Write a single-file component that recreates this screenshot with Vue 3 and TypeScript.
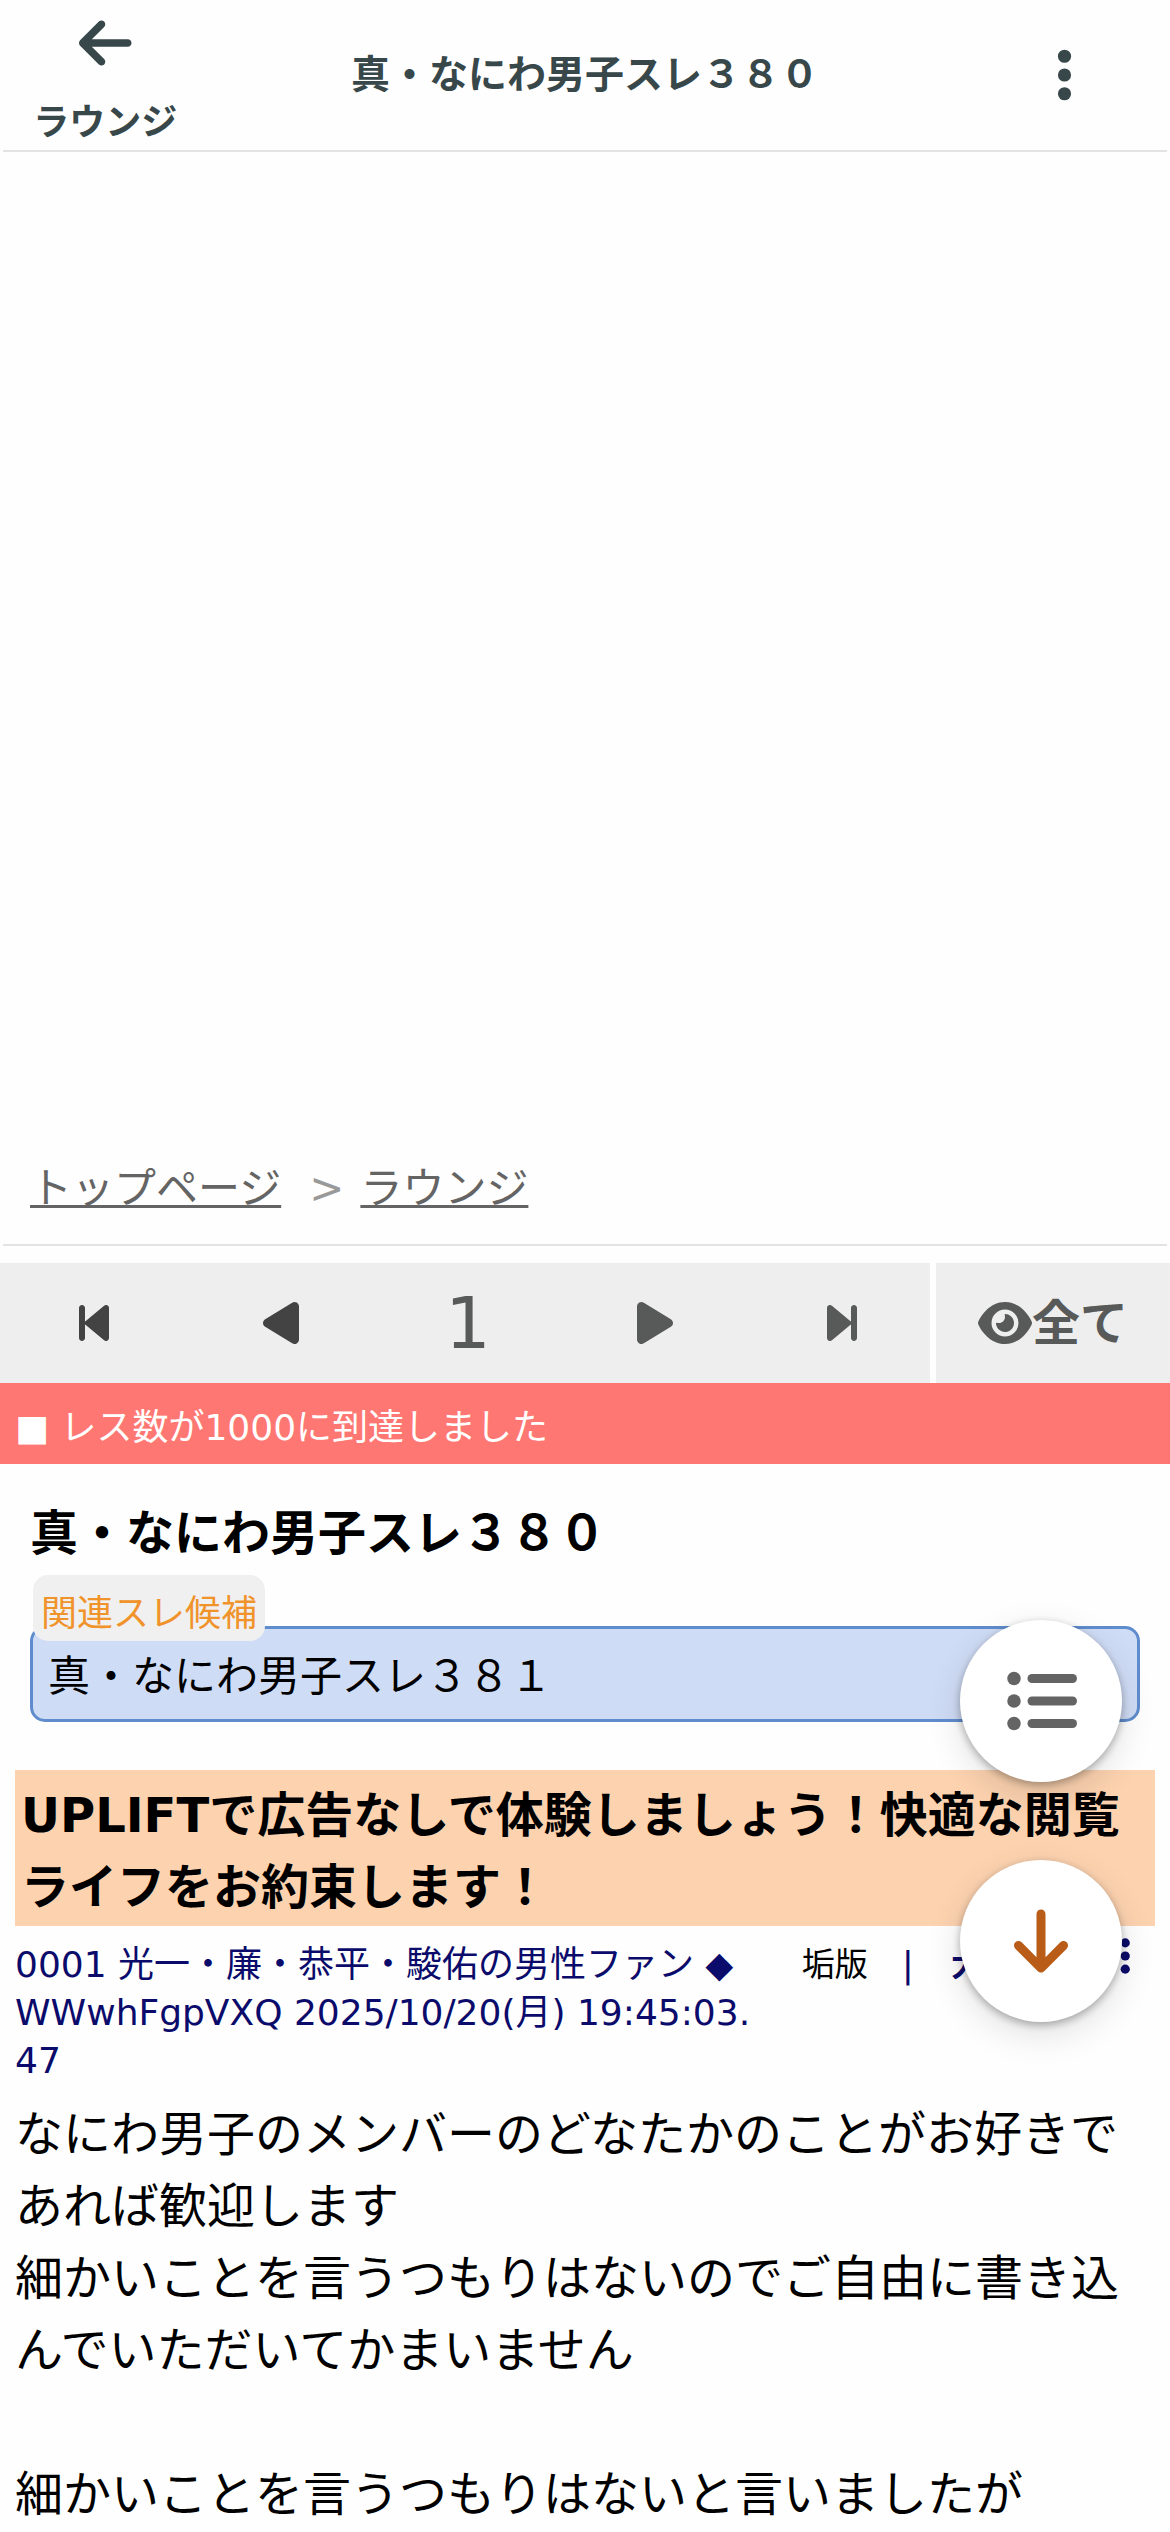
<script setup lang="ts">
interface Crumb {
  label: string
  href: string
}

interface Post {
  number: string
  name: string
  trip: string
  date: string
  lines: string[]
}

const board = 'ラウンジ'
const threadTitle = '真・なにわ男子スレ３８０'
const relatedThread = '真・なにわ男子スレ３８１'
const page = 1

const crumbs: Crumb[] = [
  { label: 'トップページ', href: '#top' },
  { label: board, href: '#board' },
]

const post: Post = {
  number: '0001',
  name: '光一・廉・恭平・駿佑の男性ファン',
  trip: '◆WWwhFgpVXQ',
  date: '2025/10/20(月) 19:45:03.47',
  lines: [
    'なにわ男子のメンバーのどなたかのことがお好きであれば歓迎します',
    '細かいことを言うつもりはないのでご自由に書き込んでいただいてかまいません',
    '',
    '細かいことを言うつもりはないと言いましたが',
  ],
}

const playPath =
  'M73 39c-14.8-9.1-33.4-9.4-48.5-.9S0 62.6 0 80V432c0 17.4 9.4 33.4 24.5 41.9s33.7 8.1 48.5-.9L361 297c14.3-8.7 23-24.2 23-41s-8.7-32.2-23-41L73 39z'
const stepPath =
  'M52.5 440.6c-9.5 7.9-22.8 9.7-34.1 4.4S0 428.4 0 416V96C0 83.6 7.2 72.3 18.4 67s24.5-3.6 34.1 4.4l192 160L256 241V96c0-17.7 14.3-32 32-32s32 14.3 32 32V416c0 17.7-14.3 32-32 32s-32-14.3-32-32V271l-11.5 9.6-192 160z'
const arrowPath =
  'M9.4 233.4c-12.5 12.5-12.5 32.8 0 45.3l160 160c12.5 12.5 32.8 12.5 45.3 0s12.5-32.8 0-45.3L109.2 288 416 288c17.7 0 32-14.3 32-32s-14.3-32-32-32l-306.7 0L214.6 118.6c12.5-12.5 12.5-32.8 0-45.3s-32.8-12.5-45.3 0l-160 160z'
const eyePath =
  'M288 32c-80.8 0-145.5 36.8-192.6 80.6C48.6 156 17.3 208 2.5 243.7c-3.3 7.9-3.3 16.7 0 24.6C17.3 304 48.6 356 95.4 399.4C142.5 443.2 207.2 480 288 480s145.5-36.8 192.6-80.6c46.8-43.5 78.1-95.4 93-131.1c3.3-7.9 3.3-16.7 0-24.6c-14.9-35.7-46.2-87.7-93-131.1C433.5 68.8 368.8 32 288 32zM144 256a144 144 0 1 1 288 0 144 144 0 1 1 -288 0zm144-64c0 35.3-28.7 64-64 64c-7.1 0-13.9-1.2-20.3-3.3c-5.5-1.8-11.9 1.6-11.7 7.4c.3 6.9 1.3 13.8 3.2 20.7c13.7 51.2 66.4 81.6 117.6 67.9s81.6-66.4 67.9-117.6c-11.1-41.5-47.8-69.4-88.6-71.1c-5.8-.2-9.2 6.1-7.4 11.7c2.1 6.4 3.3 13.2 3.3 20.3z'
</script>

<template>
  <div class="page">
    <header class="topbar">
      <a class="back" href="#board">
        <svg class="icon-lg" viewBox="0 0 448 512" aria-hidden="true"><path :d="arrowPath" /></svg>
        <span>{{ board }}</span>
      </a>
      <div class="topbar-title">{{ threadTitle }}</div>
      <button class="plain more" type="button" aria-label="メニュー">
        <svg class="icon-lg" viewBox="0 0 128 512" aria-hidden="true">
          <circle cx="64" cy="96" r="56" />
          <circle cx="64" cy="256" r="56" />
          <circle cx="64" cy="416" r="56" />
        </svg>
      </button>
    </header>
    <hr class="rule" />

    <div class="ad-slot"></div>

    <nav class="crumbs" aria-label="パンくず">
      <template v-for="(crumb, i) in crumbs" :key="crumb.href">
        <span v-if="i > 0" class="sep">&gt;</span>
        <a :href="crumb.href">{{ crumb.label }}</a>
      </template>
    </nav>
    <hr class="rule" />

    <div class="pager">
      <nav class="pager-steps" aria-label="ページ">
        <a class="dark" href="#first" aria-label="最初">
          <svg class="icon-md flip" viewBox="0 0 320 512"><path :d="stepPath" /></svg>
        </a>
        <a class="dark" href="#prev" aria-label="前">
          <svg class="icon-md flip" viewBox="0 0 384 512"><path :d="playPath" /></svg>
        </a>
        <span class="current">{{ page }}</span>
        <a href="#next" aria-label="次">
          <svg class="icon-md" viewBox="0 0 384 512"><path :d="playPath" /></svg>
        </a>
        <a href="#last" aria-label="最後">
          <svg class="icon-md" viewBox="0 0 320 512"><path :d="stepPath" /></svg>
        </a>
      </nav>
      <a class="show-all" href="#all">
        <svg class="icon-md" viewBox="0 0 576 512" aria-hidden="true"><path :d="eyePath" /></svg>
        <span>全て</span>
      </a>
    </div>

    <div class="notice">■ レス数が1000に到達しました</div>

    <main>
      <h1 class="title">{{ threadTitle }}</h1>

      <section class="related">
        <span class="related-tag">関連スレ候補</span>
        <a class="related-link" href="#related">{{ relatedThread }}</a>
      </section>

      <a class="uplift" href="#uplift">UPLIFTで広告なしで体験しましょう！快適な閲覧ライフをお約束します！</a>

      <article class="post">
        <div class="post-head">
          <div class="post-meta">{{ post.number }} {{ post.name }} {{ post.trip }} {{ post.date }}</div>
          <div class="post-tools">
            <a class="account" href="#account">垢版</a>
            <span class="bar">|</span>
            <a class="cannon" href="#cannon">大砲</a>
            <button class="plain post-more" type="button" aria-label="レスのメニュー">
              <svg class="icon-sm" viewBox="0 0 128 512" aria-hidden="true">
                <circle cx="64" cy="96" r="56" />
                <circle cx="64" cy="256" r="56" />
                <circle cx="64" cy="416" r="56" />
              </svg>
            </button>
          </div>
        </div>
        <div class="post-body">
          <p v-for="(line, i) in post.lines" :key="i">{{ line }}</p>
        </div>
      </article>
    </main>

    <div class="fabs">
      <button class="fab" type="button" aria-label="一覧">
        <svg class="icon-xl" viewBox="0 0 512 512" aria-hidden="true">
          <circle cx="64" cy="96" r="48" />
          <circle cx="64" cy="256" r="48" />
          <circle cx="64" cy="416" r="48" />
          <rect x="160" y="64" width="352" height="64" rx="32" />
          <rect x="160" y="224" width="352" height="64" rx="32" />
          <rect x="160" y="384" width="352" height="64" rx="32" />
        </svg>
      </button>
      <button class="fab down" type="button" aria-label="一番下へ">
        <svg class="icon-xl" viewBox="0 0 384 512" aria-hidden="true">
          <path
            d="M169.4 470.6c12.5 12.5 32.8 12.5 45.3 0l160-160c12.5-12.5 12.5-32.8 0-45.3s-32.8-12.5-45.3 0L224 370.8 224 64c0-17.7-14.3-32-32-32s-32 14.3-32 32l0 306.7L54.6 265.4c-12.5-12.5-32.8-12.5-45.3 0s-12.5 32.8 0 45.3l160 160z"
          />
        </svg>
      </button>
    </div>
  </div>
</template>

<style>
body {
  background: #fefefe;
}
</style>

<style scoped>
.page {
  font-family: 'DejaVu Sans', 'Noto Sans CJK JP', sans-serif;
  font-size: 48px;
  line-height: 72px;
  color: #000;
}

a {
  color: inherit;
  text-decoration: none;
}

svg {
  display: block;
  fill: currentColor;
}

.icon-sm {
  height: 42px;
}

.icon-md {
  height: 48px;
}

.icon-lg {
  height: 60px;
}

.icon-xl {
  height: 72px;
}

.flip {
  transform: scaleX(-1);
}

.plain {
  display: flex;
  align-items: center;
  justify-content: center;
  padding: 0;
  border: 0;
  background: none;
  color: inherit;
}

.rule {
  height: 2px;
  margin: 0 3px;
  border: 0;
  background: #e2e4e4;
}

.topbar {
  display: grid;
  grid-template-columns: 18% 1fr 18%;
  align-items: center;
  height: 150px;
  color: #37474a;
  font-weight: bold;
}

.back {
  display: flex;
  flex-direction: column;
  align-items: center;
  gap: 23px;
  padding-top: 13px;
  font-size: 36px;
  line-height: 54px;
}

.topbar-title {
  font-size: 39px;
  line-height: 54px;
  text-align: center;
}

.ad-slot {
  height: 1005px;
}

.crumbs {
  display: flex;
  padding: 0 30px 24px;
  color: #646464;
  font-size: 42px;
  line-height: 63px;
}

.crumbs a {
  text-decoration: underline;
  text-decoration-thickness: 3px;
  text-decoration-skip-ink: none;
}

.sep {
  margin: 0 16px 0 28px;
  color: #999;
}

.pager {
  display: flex;
  height: 120px;
  margin-top: 17px;
  color: #585959;
}

.pager-steps {
  display: flex;
  flex: 1;
  background: #eee;
}

.pager-steps > * {
  display: flex;
  flex: 1;
  align-items: center;
  justify-content: center;
}

.dark {
  color: #434343;
}

.current {
  font-size: 72px;
}

.show-all {
  display: flex;
  flex: 0 0 20%;
  align-items: center;
  justify-content: center;
  background: #eee;
  box-shadow: -6px 0 0 #fefefe;
  font-weight: bold;
}

.notice {
  padding: 18px 15px 9px;
  background: #ff7772;
  color: #fff;
  font-size: 36px;
  line-height: 54px;
}

.title {
  margin: 33px 30px 0;
  font-size: 48px;
  font-weight: bold;
}

.related {
  position: relative;
  margin: 57px 30px 0;
}

.related-tag {
  position: absolute;
  top: -51px;
  left: 3px;
  padding: 12px 8px 0;
  border-radius: 15px;
  background: #f0f0f0;
  color: #f0932b;
  font-size: 36px;
  line-height: 54px;
}

.related-link {
  display: block;
  padding: 18px 15px 12px;
  border: 3px solid #5f8ccd;
  border-radius: 15px;
  background: #cfdcf5;
  font-size: 42px;
  line-height: 60px;
}

.uplift {
  display: block;
  margin: 48px 15px 0;
  padding: 9px 6px 3px;
  background: #fcd2af;
  font-weight: bold;
}

.post {
  padding: 15px 15px 0;
}

.post-head {
  display: flex;
  justify-content: space-between;
  color: #0b0b6b;
  font-size: 36px;
  line-height: 48px;
}

.post-meta {
  flex: 0 1 744px;
  word-break: break-all;
}

.post-tools {
  display: flex;
  height: 48px;
  font-size: 33px;
}

.account {
  color: #000;
}

.bar {
  margin: 0 37px 0 34px;
  font-size: 36px;
}

.cannon {
  font-weight: bold;
}

.post-more {
  width: 60px;
  height: 30px;
  margin-left: 78px;
}

.post-body {
  margin-top: 13px;
}

.post-body p {
  min-height: 72px;
  margin: 0;
}

.fabs {
  position: fixed;
  right: 48px;
  bottom: 510px;
  display: flex;
  flex-direction: column;
  gap: 78px;
}

.fab {
  display: flex;
  align-items: center;
  justify-content: center;
  width: 162px;
  height: 162px;
  padding: 0;
  border: 0;
  border-radius: 50%;
  background: #fff;
  box-shadow: 0 3px 9px rgba(0, 0, 0, 0.3), 0 12px 36px rgba(0, 0, 0, 0.12);
  color: #646464;
}

.down {
  color: #b85c18;
}
</style>
